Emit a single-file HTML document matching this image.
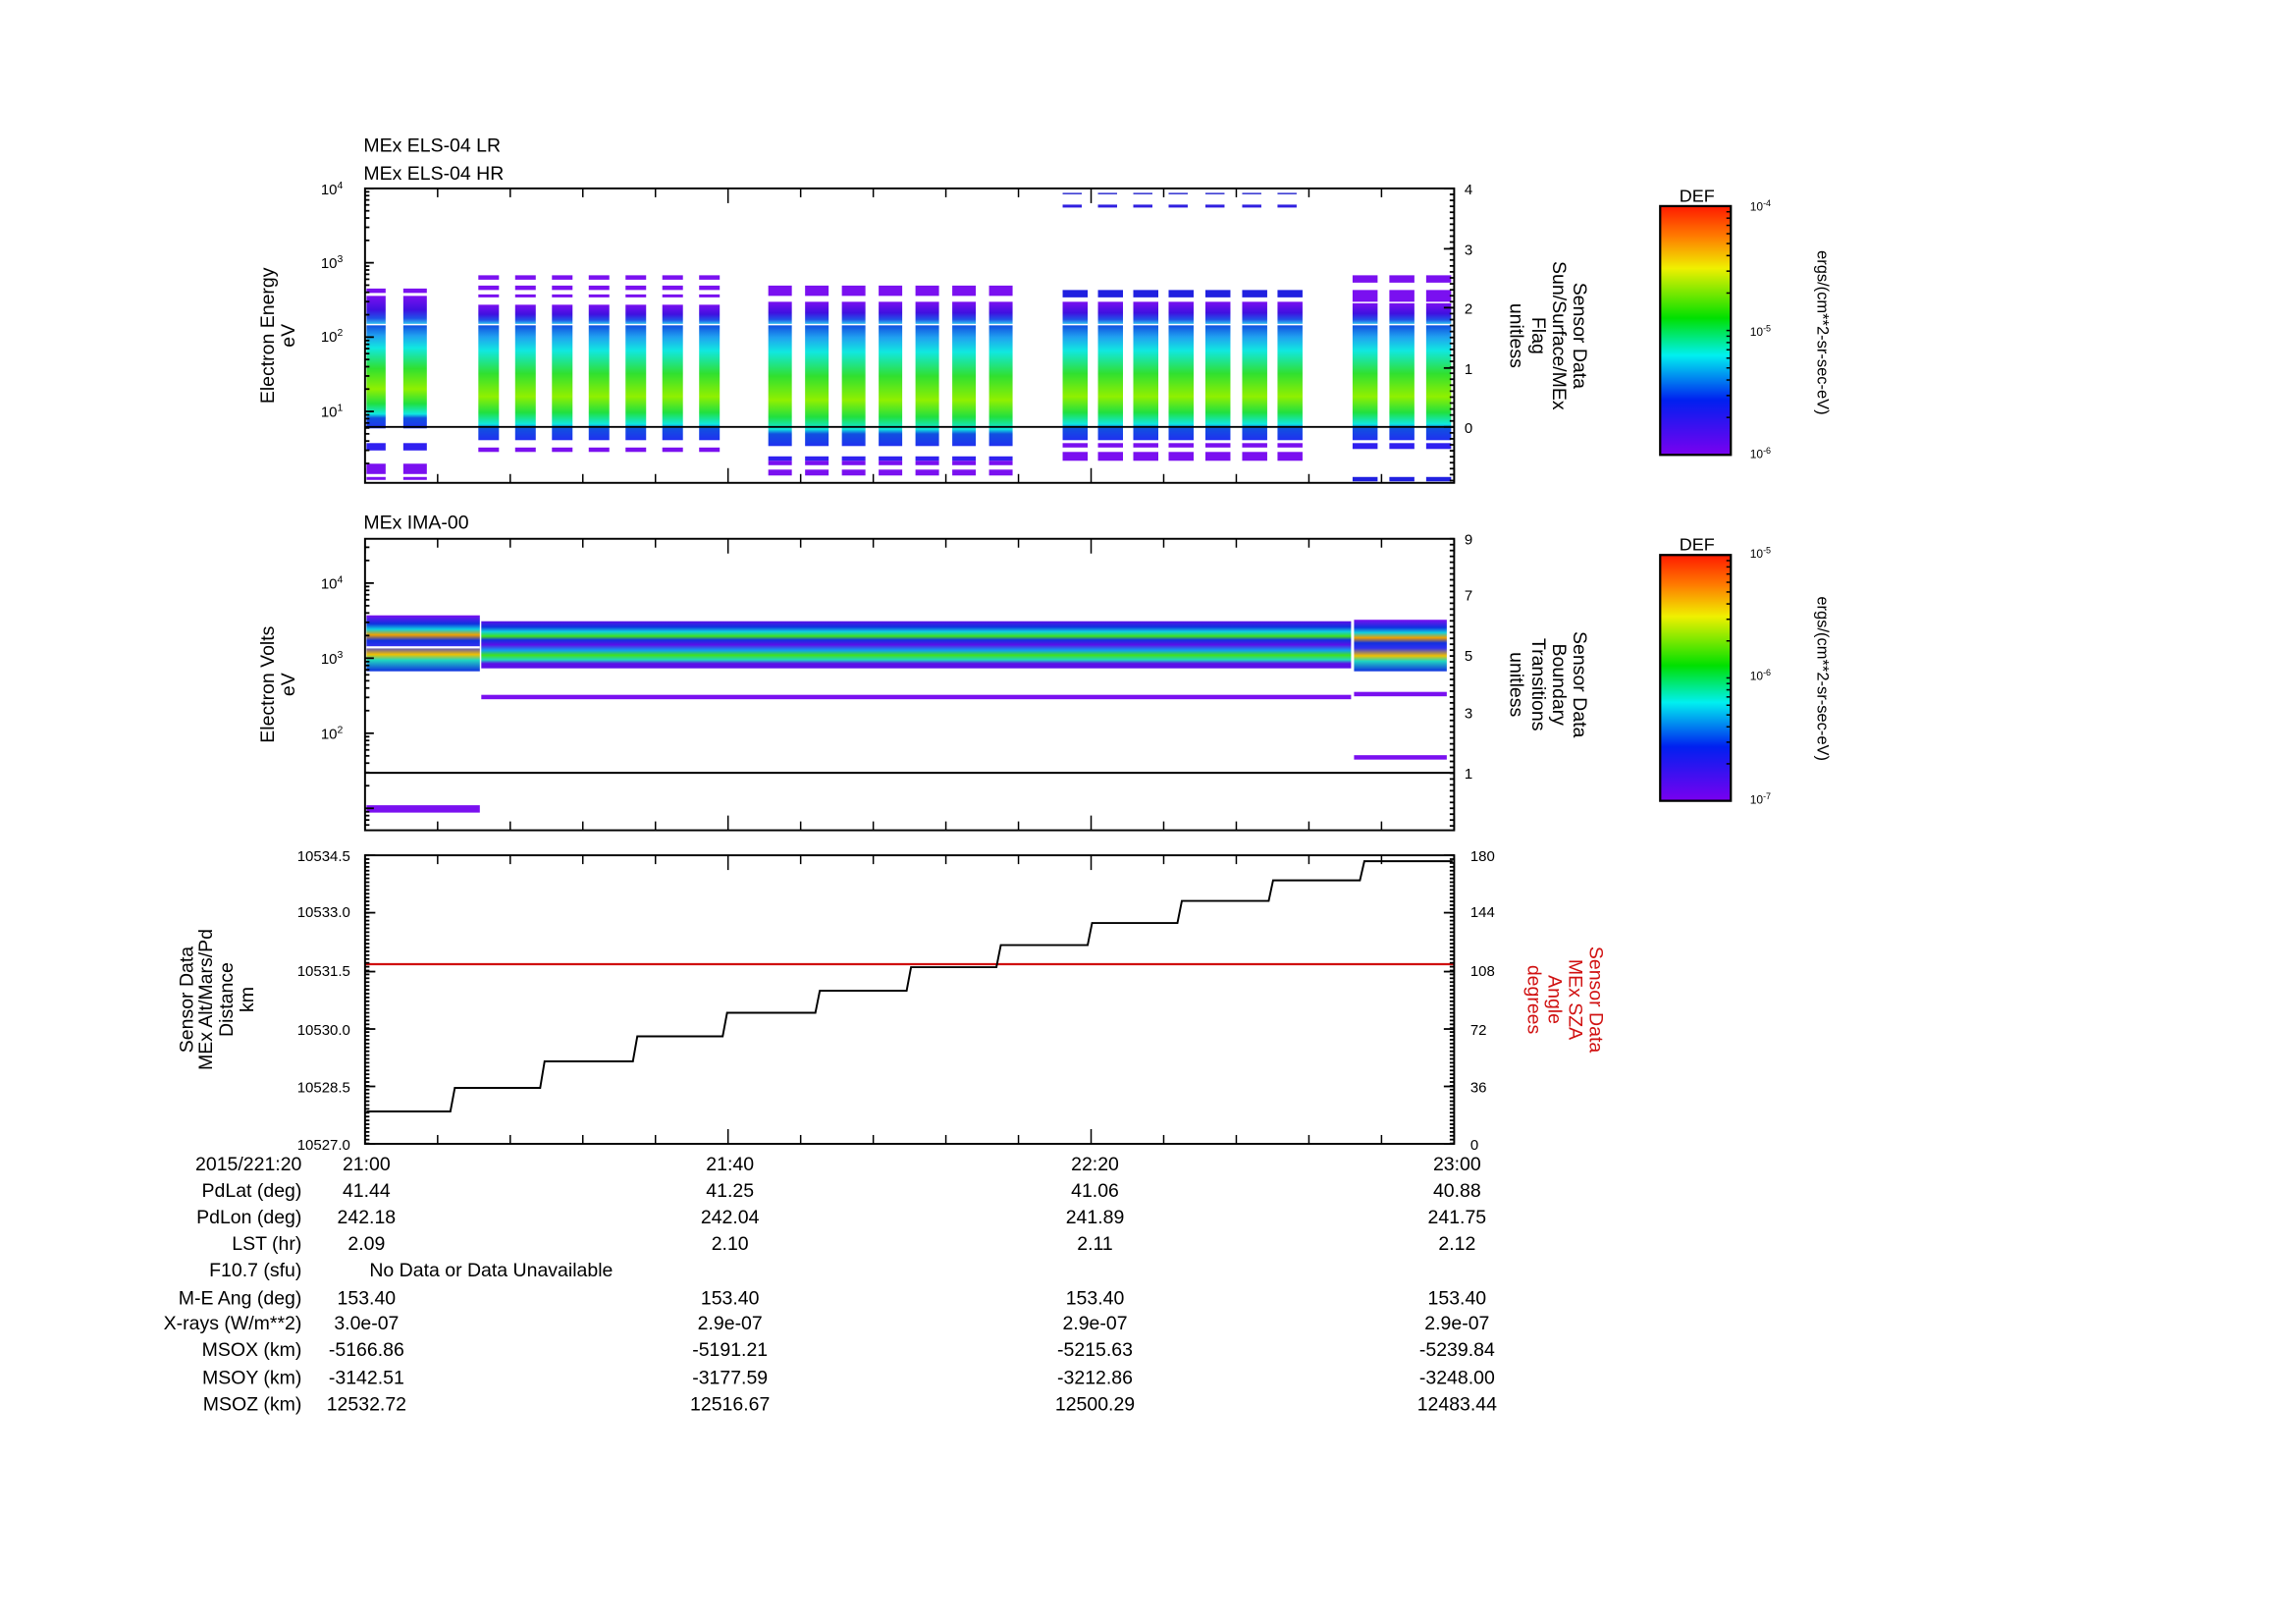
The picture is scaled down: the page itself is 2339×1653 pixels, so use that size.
<!DOCTYPE html>
<html><head><meta charset="utf-8"><style>
html,body{margin:0;padding:0;background:#fff;}
svg{display:block;}
text{font-family:"Liberation Sans",sans-serif;}
</style></head><body>
<svg id="s" width="2339" height="1653" viewBox="0 0 1560 1102.5" xmlns="http://www.w3.org/2000/svg">
<defs>
<linearGradient id="cb" x1="0" y1="0" x2="0" y2="1">
<stop offset="0" stop-color="#ff1a00"/><stop offset="0.12" stop-color="#ff7a00"/><stop offset="0.25" stop-color="#f0f000"/>
<stop offset="0.45" stop-color="#00e000"/><stop offset="0.6" stop-color="#00f0f0"/><stop offset="0.78" stop-color="#0020f0"/>
<stop offset="1" stop-color="#7a00f0"/></linearGradient>
<linearGradient id="lo" x1="0" y1="0" x2="0" y2="1">
<stop offset="0" stop-color="#1050e0"/><stop offset="0.1" stop-color="#20a0f0"/><stop offset="0.22" stop-color="#10e8e0"/>
<stop offset="0.42" stop-color="#30e030"/><stop offset="0.62" stop-color="#90f000"/><stop offset="0.76" stop-color="#20e040"/>
<stop offset="0.86" stop-color="#10e8e0"/><stop offset="0.9" stop-color="#1050e0"/><stop offset="1" stop-color="#2030f0"/></linearGradient>
<linearGradient id="up" x1="0" y1="0" x2="0" y2="1">
<stop offset="0" stop-color="#7a10f0"/><stop offset="0.5" stop-color="#4010e0"/><stop offset="0.8" stop-color="#2050e8"/><stop offset="1" stop-color="#30c0f0"/></linearGradient>
<linearGradient id="ima" x1="0" y1="0" x2="0" y2="1">
<stop offset="0" stop-color="#5a10e8"/><stop offset="0.12" stop-color="#1030e0"/><stop offset="0.22" stop-color="#10d0e0"/>
<stop offset="0.32" stop-color="#40e020"/><stop offset="0.4" stop-color="#1030e0"/><stop offset="0.5" stop-color="#5a10e8"/>
<stop offset="0.62" stop-color="#10a0f0"/><stop offset="0.72" stop-color="#40e020"/><stop offset="0.82" stop-color="#20d8c0"/>
<stop offset="0.9" stop-color="#5a10e8"/><stop offset="1" stop-color="#5a10e8"/></linearGradient>
<linearGradient id="ima1" x1="0" y1="0" x2="0" y2="1">
<stop offset="0" stop-color="#7a10f0"/><stop offset="0.15" stop-color="#1030e0"/><stop offset="0.25" stop-color="#10d0e0"/>
<stop offset="0.35" stop-color="#f0a000"/><stop offset="0.45" stop-color="#1030e0"/><stop offset="0.55" stop-color="#3030f0"/>
<stop offset="0.7" stop-color="#f0c000"/><stop offset="0.8" stop-color="#20d8c0"/><stop offset="1" stop-color="#1030e0"/></linearGradient>
</defs>
<g transform="translate(-3,-2)">
<g id="g"></g>
<g font-size="13" fill="#000">
<text x="250" y="105">MEx ELS-04 LR</text>
<text x="250" y="124">MEx ELS-04 HR</text>
<text x="250" y="361">MEx IMA-00</text>
<g text-anchor="middle">
<text transform="translate(189,230) rotate(-90)">Electron Energy</text>
<text transform="translate(203,230) rotate(-90)">eV</text>
<text transform="translate(189,467) rotate(-90)">Electron Volts</text>
<text transform="translate(203,467) rotate(-90)">eV</text>
<text transform="translate(134,681) rotate(-90)">Sensor Data</text>
<text transform="translate(147,681) rotate(-90)">MEx Alt/Mars/Pd</text>
<text transform="translate(161,681) rotate(-90)">Distance</text>
<text transform="translate(175,681) rotate(-90)">km</text>
<text transform="translate(1072,230) rotate(90)">Sensor Data</text>
<text transform="translate(1058,230) rotate(90)">Sun/Surface/MEx</text>
<text transform="translate(1044,230) rotate(90)">Flag</text>
<text transform="translate(1029,230) rotate(90)">unitless</text>
<text transform="translate(1072,467) rotate(90)">Sensor Data</text>
<text transform="translate(1058,467) rotate(90)">Boundary</text>
<text transform="translate(1044,467) rotate(90)">Transitions</text>
<text transform="translate(1029,467) rotate(90)">unitless</text>
<g fill="#d01010">
<text transform="translate(1083,681) rotate(90)">Sensor Data</text>
<text transform="translate(1069,681) rotate(90)">MEx SZA</text>
<text transform="translate(1055,681) rotate(90)">Angle</text>
<text transform="translate(1041,681) rotate(90)">degrees</text>
</g>
<text transform="translate(1238,228) rotate(90)" font-size="11">ergs/(cm**2-sr-sec-eV)</text>
<text transform="translate(1238,463) rotate(90)" font-size="11">ergs/(cm**2-sr-sec-eV)</text>
<text x="1156" y="139" font-size="12">DEF</text>
<text x="1156" y="376" font-size="12">DEF</text>
</g>
<g font-size="8">
<text x="1192" y="145">10<tspan dy="-3" font-size="6">-4</tspan></text>
<text x="1192" y="230">10<tspan dy="-3" font-size="6">-5</tspan></text>
<text x="1192" y="313">10<tspan dy="-3" font-size="6">-6</tspan></text>
<text x="1192" y="381">10<tspan dy="-3" font-size="6">-5</tspan></text>
<text x="1192" y="464">10<tspan dy="-3" font-size="6">-6</tspan></text>
<text x="1192" y="548">10<tspan dy="-3" font-size="6">-7</tspan></text>
</g>
<g font-size="10" text-anchor="end">
<text x="236" y="134">10<tspan dy="-4" font-size="7">4</tspan></text>
<text x="236" y="184">10<tspan dy="-4" font-size="7">3</tspan></text>
<text x="236" y="234">10<tspan dy="-4" font-size="7">2</tspan></text>
<text x="236" y="285">10<tspan dy="-4" font-size="7">1</tspan></text>
<text x="236" y="402">10<tspan dy="-4" font-size="7">4</tspan></text>
<text x="236" y="453">10<tspan dy="-4" font-size="7">3</tspan></text>
<text x="236" y="504">10<tspan dy="-4" font-size="7">2</tspan></text>
<text x="241" y="587">10534.5</text>
<text x="241" y="625">10533.0</text>
<text x="241" y="665">10531.5</text>
<text x="241" y="705">10530.0</text>
<text x="241" y="744">10528.5</text>
<text x="241" y="783">10527.0</text>
</g>
<g font-size="10">
<text x="998" y="134">4</text><text x="998" y="175">3</text><text x="998" y="215">2</text><text x="998" y="256">1</text><text x="998" y="296">0</text>
<text x="998" y="372">9</text><text x="998" y="410">7</text><text x="998" y="451">5</text><text x="998" y="490">3</text><text x="998" y="531">1</text>
<text x="1002" y="587">180</text><text x="1002" y="625">144</text><text x="1002" y="665">108</text><text x="1002" y="705">72</text><text x="1002" y="744">36</text><text x="1002" y="783">0</text>
</g>
<g font-size="13">
<g text-anchor="end">
<text x="208" y="797">2015/221:20</text><text x="208" y="815">PdLat (deg)</text><text x="208" y="833">PdLon (deg)</text>
<text x="208" y="851">LST (hr)</text><text x="208" y="869">F10.7 (sfu)</text><text x="208" y="888">M-E Ang (deg)</text>
<text x="208" y="905">X-rays (W/m**2)</text><text x="208" y="923">MSOX (km)</text><text x="208" y="942">MSOY (km)</text><text x="208" y="960">MSOZ (km)</text>
</g>
<text x="254" y="869">No Data or Data Unavailable</text>
<g text-anchor="middle">
<text x="252" y="797">21:00</text><text x="499" y="797">21:40</text><text x="747" y="797">22:20</text><text x="993" y="797">23:00</text>
<text x="252" y="815">41.44</text><text x="499" y="815">41.25</text><text x="747" y="815">41.06</text><text x="993" y="815">40.88</text>
<text x="252" y="833">242.18</text><text x="499" y="833">242.04</text><text x="747" y="833">241.89</text><text x="993" y="833">241.75</text>
<text x="252" y="851">2.09</text><text x="499" y="851">2.10</text><text x="747" y="851">2.11</text><text x="993" y="851">2.12</text>
<text x="252" y="888">153.40</text><text x="499" y="888">153.40</text><text x="747" y="888">153.40</text><text x="993" y="888">153.40</text>
<text x="252" y="905">3.0e-07</text><text x="499" y="905">2.9e-07</text><text x="747" y="905">2.9e-07</text><text x="993" y="905">2.9e-07</text>
<text x="252" y="923">-5166.86</text><text x="499" y="923">-5191.21</text><text x="747" y="923">-5215.63</text><text x="993" y="923">-5239.84</text>
<text x="252" y="942">-3142.51</text><text x="499" y="942">-3177.59</text><text x="747" y="942">-3212.86</text><text x="993" y="942">-3248.00</text>
<text x="252" y="960">12532.72</text><text x="499" y="960">12516.67</text><text x="747" y="960">12500.29</text><text x="993" y="960">12483.44</text>
</g></g>
</g>
</g>
</svg>
<script>
var g=document.getElementById('g'),NS='http://www.w3.org/2000/svg';
function el(t,a){var e=document.createElementNS(NS,t);for(var k in a)e.setAttribute(k,a[k]);g.appendChild(e);return e;}
function R(x,y,w,h,f){el('rect',{x:x,y:y,width:w,height:h,fill:f});}
function L(x1,y1,x2,y2,w,c){el('line',{x1:x1,y1:y1,x2:x2,y2:y2,stroke:c||'#000','stroke-width':w||1});}
var X0=251,X1=991;
var cols=[[252,13],[277,16]];
[328,353,378,403,428,453,478].forEach(function(x){cols.push([x,14]);});
[525,550,575,600,625,650,675].forEach(function(x){cols.push([x,16]);});
[725,749,773,797,822,847,871].forEach(function(x){cols.push([x,17]);});
[922,947,972].forEach(function(x){cols.push([x,17]);});
cols.forEach(function(c,i){
 var x=c[0],w=c[1],grp=i<2?1:i<9?2:i<16?3:i<23?4:5;
 R(x,223,w,(grp==1?70:grp==3?82:78),'url(#lo)');
 if(grp==1){R(x,198,w,3,'#7a10f0');R(x,203,w,19,'url(#up)');R(x,303,w,5,'#3020f0');R(x,317,w,7,'#7a10f0');R(x,326,w,2,'#7a10f0');}
 if(grp==2){R(x,189,w,3,'#7a10f0');R(x,196,w,3,'#7a10f0');R(x,202,w,2,'#7a10f0');R(x,209,w,13,'url(#up)');R(x,306,w,3,'#7a10f0');}
 if(grp==3){R(x,196,w,7,'#7a10f0');R(x,207,w,15,'url(#up)');R(x,312,w,3,'#3020f0');R(x,321,w,4,'#7a10f0');R(x,315,w,3,'#7a10f0');}
 if(grp==4){R(x,199,w,5,'#2020e0');R(x,207,w,15,'url(#up)');R(x,303,w,3,'#7a10f0');R(x,309,w,6,'#7a10f0');R(x,133,w-4,1,'#3030d0');R(x,141,w-4,2,'#3020e0');}
 if(grp==5){R(x,189,w,5,'#7a10f0');R(x,199,w,8,'#7a10f0');R(x,208,w,14,'url(#up)');R(x,326,w,3,'#2020e0');R(x,303,w,4,'#3020f0');}
});
L(X0,292,X1,292,1.3);
R(252,420,77,38,'url(#ima1)');R(252,441,77,1.5,'#fff');
R(330,424,591,32,'url(#ima)');R(923,423,63,35,'url(#ima1)');
R(330,474,591,3,'#7a10f0');R(923,472,63,3,'#7a10f0');R(923,515,63,3,'#7a10f0');R(252,549,77,5,'#7a10f0');
L(X0,527,X1,527,1.3);
L(X0,657,X1,657,1.5,'#d01010');
var st=[[252,757],[312,741],[373,723],[436,706],[497,690],[560,675],[622,659],[683,644],[745,629],[806,614],[868,600],[930,587]];
var d='M'+st[0][0]+' '+st[0][1];
for(var i=1;i<st.length;i++){d+=' L'+(st[i][0]-3)+' '+st[i-1][1]+' L'+st[i][0]+' '+st[i][1];}
d+=' L990 587';
el('path',{d:d,fill:'none',stroke:'#000','stroke-width':1.3});
function frame(t,b){
 el('rect',{x:X0,y:t,width:X1-X0,height:b-t,fill:'none',stroke:'#000','stroke-width':1.3});
 for(var k=0;k<=15;k++){var x=X0+(X1-X0)*k/15,mj=k%5==0,l=mj?10:6;L(x,t,x,t+l,1);L(x,b,x,b-l,1);}
}
frame(130,330);frame(368,566);frame(583,779);
function logt(t,b,topexp,ppd){
 for(var e=-2;e<6;e++)for(var k=1;k<10;k++){var y=t+(topexp-e-Math.log10(k))*ppd;if(y>=t&&y<=b){L(X0,y,X0+(k==1?6:3),y,1.2);}}
}
logt(130,330,4,50.5);logt(368,566,4.59,51);
function lint(t,b,step){for(var y=t;y<=b+0.1;y+=step)L(X1,y,X1-3,y,1.2);}
lint(130,330,4.05);lint(368,566,3.98);
for(var y=583;y<=779.1;y+=2.61){L(X0,y,X0+3,y,1.2);L(X1,y,X1-3,y,1.2);}
[130,171,211,252,292].forEach(function(y){L(X1,y,X1-7,y,1.2);});
[583,622,662,701,740,779].forEach(function(y){L(X0,y,X0+7,y,1.2);L(X1,y,X1-7,y,1.2);});
[[142,311],[379,546]].forEach(function(c){
 R(1131,c[0],48,c[1]-c[0],'url(#cb)');
 el('rect',{x:1131,y:c[0],width:48,height:c[1]-c[0],fill:'none',stroke:'#000','stroke-width':1.5});
 var h=(c[1]-c[0])/2;
 for(var e=0;e<2;e++)for(var k=1;k<10;k++){var y=c[0]+(e+1-Math.log10(k))*h;if(k>1||e==0)L(1179,y,1176,y,1);}
});
</script>
</body></html>
